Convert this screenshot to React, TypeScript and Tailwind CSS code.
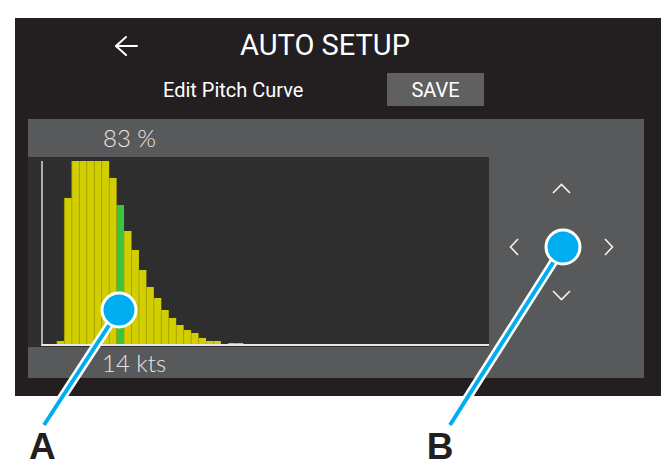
const bars = [4, 147, 184, 184, 184, 184, 184, 167, 140, 114, 95, 75, 58, 47, 35, 27, 20, 15, 12, 7, 4, 4, 0, 2, 2];
const greenIndex = 8;

function BackArrow() {
  return (
    <svg width="24" height="20" viewBox="0 0 24 20" fill="none" stroke="white" strokeWidth="2" strokeLinecap="round" strokeLinejoin="round">
      <path d="M23 10H2" />
      <path d="M12 1L2 10l10 9" />
    </svg>
  );
}

function Chevron({ dir }: { dir: "up" | "down" | "left" | "right" }) {
  if (dir === "up" || dir === "down") {
    const d = dir === "up" ? "M1 10L9.5 1.5 18 10" : "M1 1l8.5 8.5L18 1";
    return (
      <svg width="19" height="11" viewBox="0 0 19 11" fill="none" stroke="#f2f2f2" strokeWidth="1.6">
        <path d={d} />
      </svg>
    );
  }
  const d = dir === "left" ? "M9 1L1.5 9 9 17" : "M1 1l7.5 8L1 17";
  return (
    <svg width="10" height="18" viewBox="0 0 10 18" fill="none" stroke="#f2f2f2" strokeWidth="1.6">
      <path d={d} />
    </svg>
  );
}

function PitchChart() {
  const base = 188;
  const bw = 7.45;
  return (
    <svg width="461" height="190" viewBox="0 0 461 190" className="block">
      <rect width="461" height="190" fill="#2e2e2e" />
      {bars.map((h, i) => {
        const x = 29 + i * bw;
        if (h === 0) return null;
        return (
          <g key={i}>
            <rect x={x} y={base - h} width={bw} height={h} fill={i === greenIndex ? "#3dc43d" : "#d2ce00"} />
            <line x1={x} y1={base - h} x2={x} y2={base} stroke="#aaa600" strokeWidth="0.8" />
          </g>
        );
      })}
      <line x1="14" y1="4" x2="14" y2="189" stroke="#d9d9d9" strokeWidth="1.5" />
      <line x1="13.5" y1="188" x2="461" y2="188" stroke="#e8e8e8" strokeWidth="2" />
    </svg>
  );
}

function Callouts() {
  const blue = "#00aeef";
  return (
    <svg className="absolute inset-0 pointer-events-none" width="672" height="472" viewBox="0 0 672 472">
      <line x1="119" y1="310" x2="44" y2="425" stroke="white" strokeWidth="9" />
      <line x1="119" y1="310" x2="44" y2="425" stroke={blue} strokeWidth="4" />
      <circle cx="119" cy="310" r="17" fill={blue} stroke="white" strokeWidth="3" />
      <line x1="563" y1="247" x2="450" y2="425" stroke="white" strokeWidth="9" />
      <line x1="563" y1="247" x2="450" y2="425" stroke={blue} strokeWidth="4" />
      <circle cx="563" cy="247" r="17" fill={blue} stroke="white" strokeWidth="3" />
    </svg>
  );
}

export default function App() {
  return (
    <div className="relative w-[672px] h-[472px] bg-white overflow-hidden">
      <div className="pt-[18px] pl-[15px]">
        <div className="w-[646px] h-[378px] bg-[#231f20] flex flex-col">
          <div className="h-[55px] flex items-center pl-[99px]">
            <BackArrow />
            <span className="ml-[102px] text-white text-[29px] leading-none font-[Roboto,sans-serif]">AUTO SETUP</span>
          </div>
          <div className="h-[33px] flex items-center pl-[148px] font-[Roboto,sans-serif]">
            <span className="w-[224px] text-white text-[20px] leading-none">Edit Pitch Curve</span>
            <div className="w-[97px] h-[33px] bg-[#606061] flex items-center justify-center text-white text-[20px] leading-none">
              SAVE
            </div>
          </div>
          <div className="mt-[13px] ml-[13px] w-[616px] h-[259px] bg-[#58595b] flex">
            <div className="w-[461px] flex flex-col">
              <div className="h-[38px] flex items-center pl-[75px] text-[24px] leading-none text-[#e6e6e6] font-light font-[Lato,sans-serif]">
                83 %
              </div>
              <PitchChart />
              <div className="h-[31px] flex items-center pl-[74px] text-[24px] leading-none text-[#e6e6e6] font-light font-[Lato,sans-serif]">
                14 kts
              </div>
            </div>
            <div className="flex-1 flex items-center justify-center pr-[10px] pb-[13px]">
              <div className="flex flex-col items-center">
                <Chevron dir="up" />
                <div className="mt-[44px] flex items-center">
                  <Chevron dir="left" />
                  <div className="w-[85px]" />
                  <Chevron dir="right" />
                </div>
                <div className="mt-[34px]">
                  <Chevron dir="down" />
                </div>
              </div>
            </div>
          </div>
        </div>
        <div className="mt-[32px] flex font-['Liberation_Sans',Arial,sans-serif] font-bold text-[37px] leading-[37px] text-[#231f20]">
          <span className="ml-[14px]">A</span>
          <span className="ml-[371px]">B</span>
        </div>
      </div>
      <Callouts />
    </div>
  );
}
